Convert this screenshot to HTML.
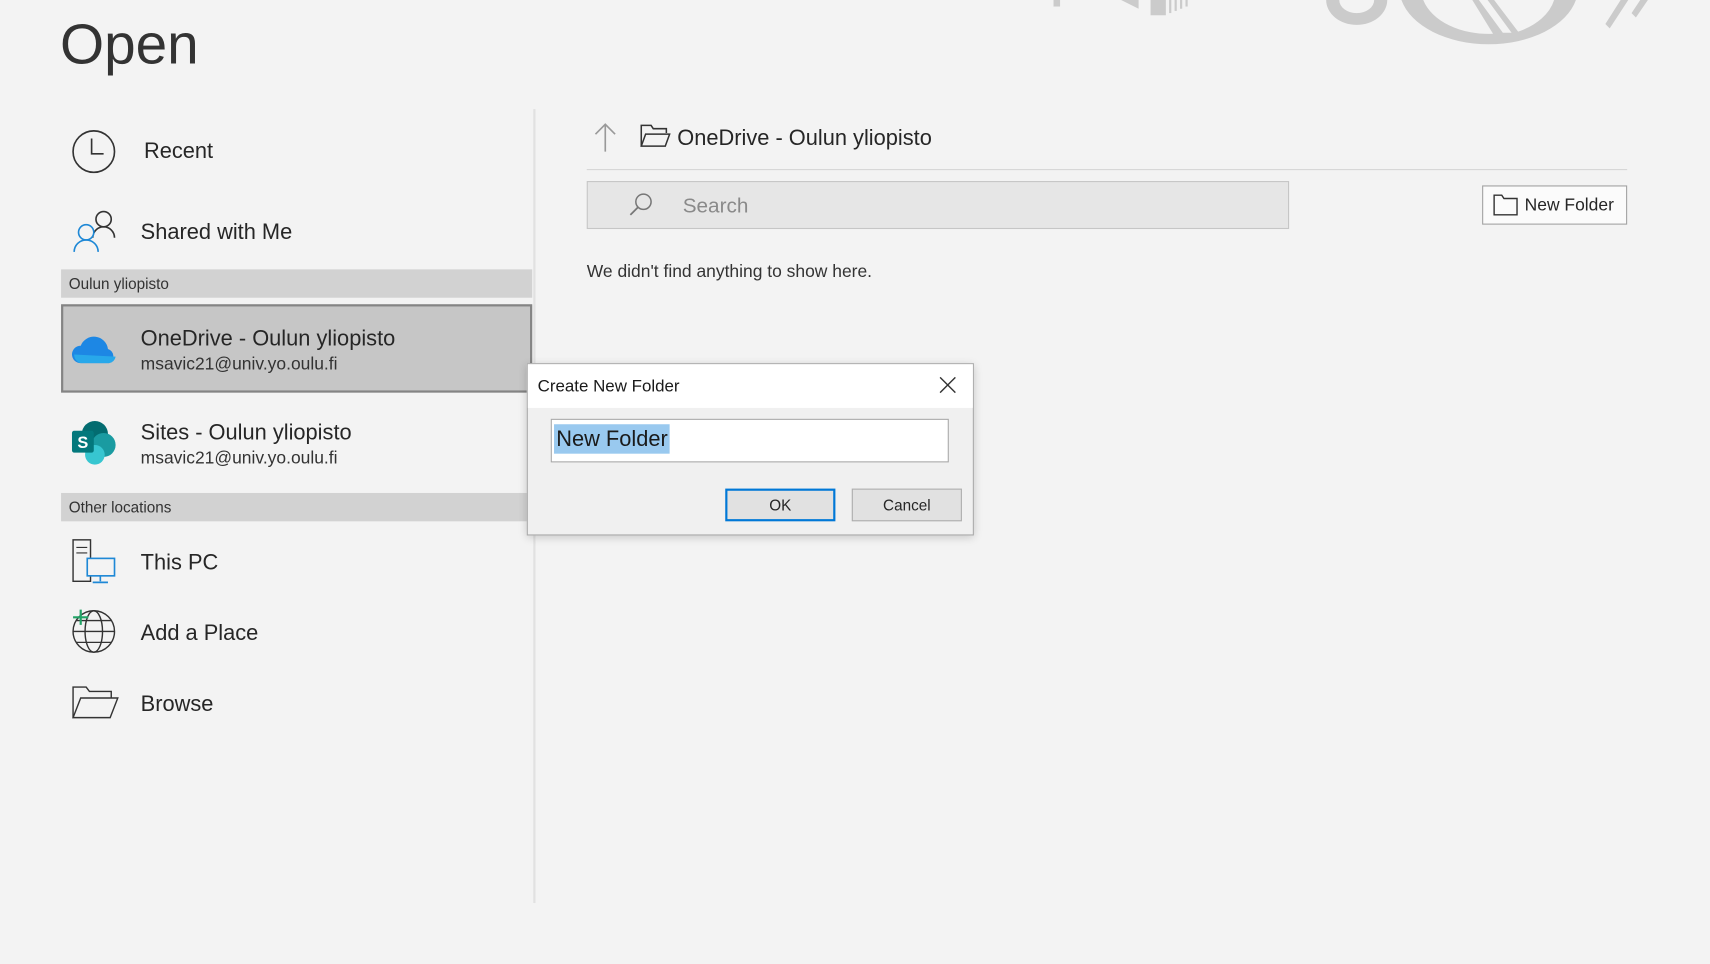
<!DOCTYPE html>
<html><head><meta charset="utf-8"><style>
html,body{margin:0;padding:0;width:1710px;height:964px;overflow:hidden;background:#f3f3f3}
#w{position:absolute;left:0;top:0;width:1568px;height:884px;transform:scale(1.0906);transform-origin:0 0;font-family:"Liberation Sans",sans-serif;color:#262626}
.a{position:absolute}
.big{font-size:20px;color:#262626}
.sub{font-size:16px;color:#333}
.hdr{position:absolute;left:56px;width:432px;height:26px;background:#d2d2d2;font-size:14px;line-height:27px;text-indent:7px;color:#333}
</style></head><body><div id="w">
<svg class="a" style="left:940px;top:0" width="628" height="60" viewBox="0 0 628 60">
<g fill="#cbcbcb"><rect x="26" y="0" width="6" height="6"/><path d="M88 0 L104 0 L104 8 Z"/><rect x="115" y="0" width="14" height="14"/><rect x="132" y="0" width="2" height="12"/><rect x="137" y="0" width="2" height="10"/><rect x="142" y="0" width="2" height="8"/><rect x="147" y="0" width="2" height="6"/>
<path d="M276 0 a27 22 0 0 0 56 0 h-12 a16 12 0 0 1 -32 0 Z"/>
<path d="M345 0 a82 52 0 0 0 160 0 h-20 a62 42 0 0 1 -33 29 L430 0 h-6 l22 30 h-8 L416 0 h-6 l19 31 a62 42 0 0 1 -64 -31 Z"/>
<path d="M532 22 l14 -22 h7 l-17 26 Z M556 12 l8 -12 h7 l-11 16 Z"/></g></svg>
<div class="a" style="left:55px;top:11px;font-size:52px;color:#333">Open</div>
<div class="a" style="left:489px;top:100px;width:2px;height:728px;background:#e1e1e1"></div>
<svg class="a" style="left:66px;top:119px" width="42" height="42"><circle cx="20" cy="20" r="19" fill="none" stroke="#333" stroke-width="1.5"/><path d="M18 8v14h11" fill="none" stroke="#333" stroke-width="1.5"/></svg>
<div class="a big" style="left:132px;top:128px">Recent</div>
<svg class="a" style="left:66px;top:190px" width="44" height="42"><circle cx="29" cy="11" r="7" fill="none" stroke="#333" stroke-width="1.5"/><path d="M19 28a10 10 0 0 1 20 0" fill="none" stroke="#333" stroke-width="1.5"/><circle cx="13" cy="23" r="7" fill="#f3f3f3" stroke="#1e88d6" stroke-width="1.5"/><path d="M2 41a11 11 0 0 1 22 0" fill="none" stroke="#1e88d6" stroke-width="1.5"/></svg>
<div class="a big" style="left:129px;top:202px">Shared with Me</div>
<div class="hdr" style="top:247px">Oulun yliopisto</div>
<div class="a" style="left:56px;top:279px;width:428px;height:77px;background:#c6c6c6;border:2px solid #848484"></div>
<svg class="a" style="left:66px;top:305px" width="42" height="30"><path d="M8 28a8 8 0 0 1 0-16a13 13 0 0 1 25 3a7 7 0 0 1 1 13Z" fill="#1d87e4"/><path d="M2 20a8 8 0 0 0 6 8h26a7 7 0 0 0 6-6Z" fill="#28a8ea"/></svg>
<div class="a big" style="left:129px;top:300px">OneDrive - Oulun yliopisto</div>
<div class="a sub" style="left:129px;top:326px">msavic21@univ.yo.oulu.fi</div>
<svg class="a" style="left:65px;top:385px" width="44" height="42"><circle cx="22" cy="13" r="12" fill="#036c70"/><circle cx="30" cy="23" r="11" fill="#1a9ba1"/><circle cx="22" cy="32" r="9" fill="#37c6d0"/><rect x="1" y="10" width="20" height="20" rx="2" fill="#03787c"/><text x="6" y="26" font-size="15" font-weight="bold" fill="#fff" font-family="Liberation Sans">S</text></svg>
<div class="a big" style="left:129px;top:386px">Sites - Oulun yliopisto</div>
<div class="a sub" style="left:129px;top:412px">msavic21@univ.yo.oulu.fi</div>
<div class="hdr" style="top:452px">Other locations</div>
<svg class="a" style="left:66px;top:494px" width="42" height="42"><rect x="1" y="1" width="16" height="38" fill="none" stroke="#333" stroke-width="1.3"/><path d="M4 8h10M4 13h10" stroke="#333"/><rect x="14" y="18" width="25" height="16" fill="#f3f3f3" stroke="#1e88d6" stroke-width="1.5"/><path d="M26 34v5M19 40h14" stroke="#1e88d6" stroke-width="1.5"/></svg>
<div class="a big" style="left:129px;top:505px">This PC</div>
<svg class="a" style="left:64px;top:557px" width="44" height="44"><circle cx="22" cy="22" r="19" fill="none" stroke="#333" stroke-width="1.3"/><ellipse cx="22" cy="22" rx="8" ry="19" fill="none" stroke="#333" stroke-width="1.3"/><path d="M3 22h38M6 12h32M6 32h32" stroke="#333" stroke-width="1.2"/><path d="M10 2v14M3 9h14" stroke="#21a366" stroke-width="2"/></svg>
<div class="a big" style="left:129px;top:570px">Add a Place</div>
<svg class="a" style="left:66px;top:628px" width="44" height="32"><path d="M1 30V2h12l3 4h20v6" fill="none" stroke="#333" stroke-width="1.3"/><path d="M1 30l7-18h34l-7 18Z" fill="none" stroke="#333" stroke-width="1.3"/></svg>
<div class="a big" style="left:129px;top:635px">Browse</div>
<svg class="a" style="left:544px;top:112px" width="22" height="28"><path d="M11 27V2M2 11l9-9 9 9" fill="none" stroke="#999" stroke-width="1.5"/></svg>
<svg class="a" style="left:587px;top:114px" width="28" height="22"><path d="M1 20V1h9l2 3h12v4" fill="none" stroke="#333" stroke-width="1.4"/><path d="M1 20l4-11h22l-4 11Z" fill="none" stroke="#333" stroke-width="1.4"/></svg>
<div class="a big" style="left:621px;top:116px">OneDrive - Oulun yliopisto</div>
<div class="a" style="left:538px;top:155px;width:954px;height:1px;background:#d6d6d6"></div>
<div class="a" style="left:538px;top:166px;width:642px;height:42px;background:#e6e6e6;border:1px solid #c6c6c6"></div>
<svg class="a" style="left:576px;top:176px" width="24" height="24"><circle cx="14" cy="9" r="7" fill="none" stroke="#777" stroke-width="1.4"/><path d="M9 14L2 21" stroke="#777" stroke-width="1.6"/></svg>
<div class="a" style="left:626px;top:179px;font-size:19px;color:#8a8a8a">Search</div>
<div class="a" style="left:1359px;top:170px;width:131px;height:34px;background:#fbfbfb;border:1px solid #a0a0a0"></div>
<svg class="a" style="left:1369px;top:178px" width="24" height="20"><path d="M1 19V1h7l2 3h12v15Z" fill="none" stroke="#333" stroke-width="1.3"/></svg>
<div class="a" style="left:1398px;top:180px;font-size:16px;color:#262626">New Folder</div>
<div class="a" style="left:538px;top:241px;font-size:16px;color:#333">We didn't find anything to show here.</div>
<div class="a" style="left:483px;top:333px;width:408px;height:156px;background:#f0f0f0;border:1px solid #aaa;box-shadow:0 2px 8px rgba(0,0,0,.2)"></div>
<div class="a" style="left:484px;top:334px;width:408px;height:40px;background:#fff"></div>
<div class="a" style="left:493px;top:346px;font-size:15.5px;color:#1a1a1a">Create New Folder</div>
<svg class="a" style="left:861px;top:345px" width="16" height="16"><path d="M1 1l14 14M15 1L1 15" stroke="#333" stroke-width="1.3"/></svg>
<div class="a" style="left:505px;top:384px;width:363px;height:38px;background:#fff;border:1px solid #a8a8a8"></div>
<div class="a" style="left:508px;top:389px;height:27px;padding:0 2px;background:#99c9ef;font-size:20px;line-height:28px;color:#1a1a1a">New Folder</div>
<div class="a" style="left:665px;top:448px;width:101px;height:30px;background:#e1e1e1;border:2px solid #0078d7;box-sizing:border-box;font-size:14px;line-height:27px;text-align:center">OK</div>
<div class="a" style="left:781px;top:448px;width:101px;height:30px;background:#e1e1e1;border:1px solid #adadad;box-sizing:border-box;font-size:14px;line-height:29px;text-align:center">Cancel</div>
</div></body></html>
